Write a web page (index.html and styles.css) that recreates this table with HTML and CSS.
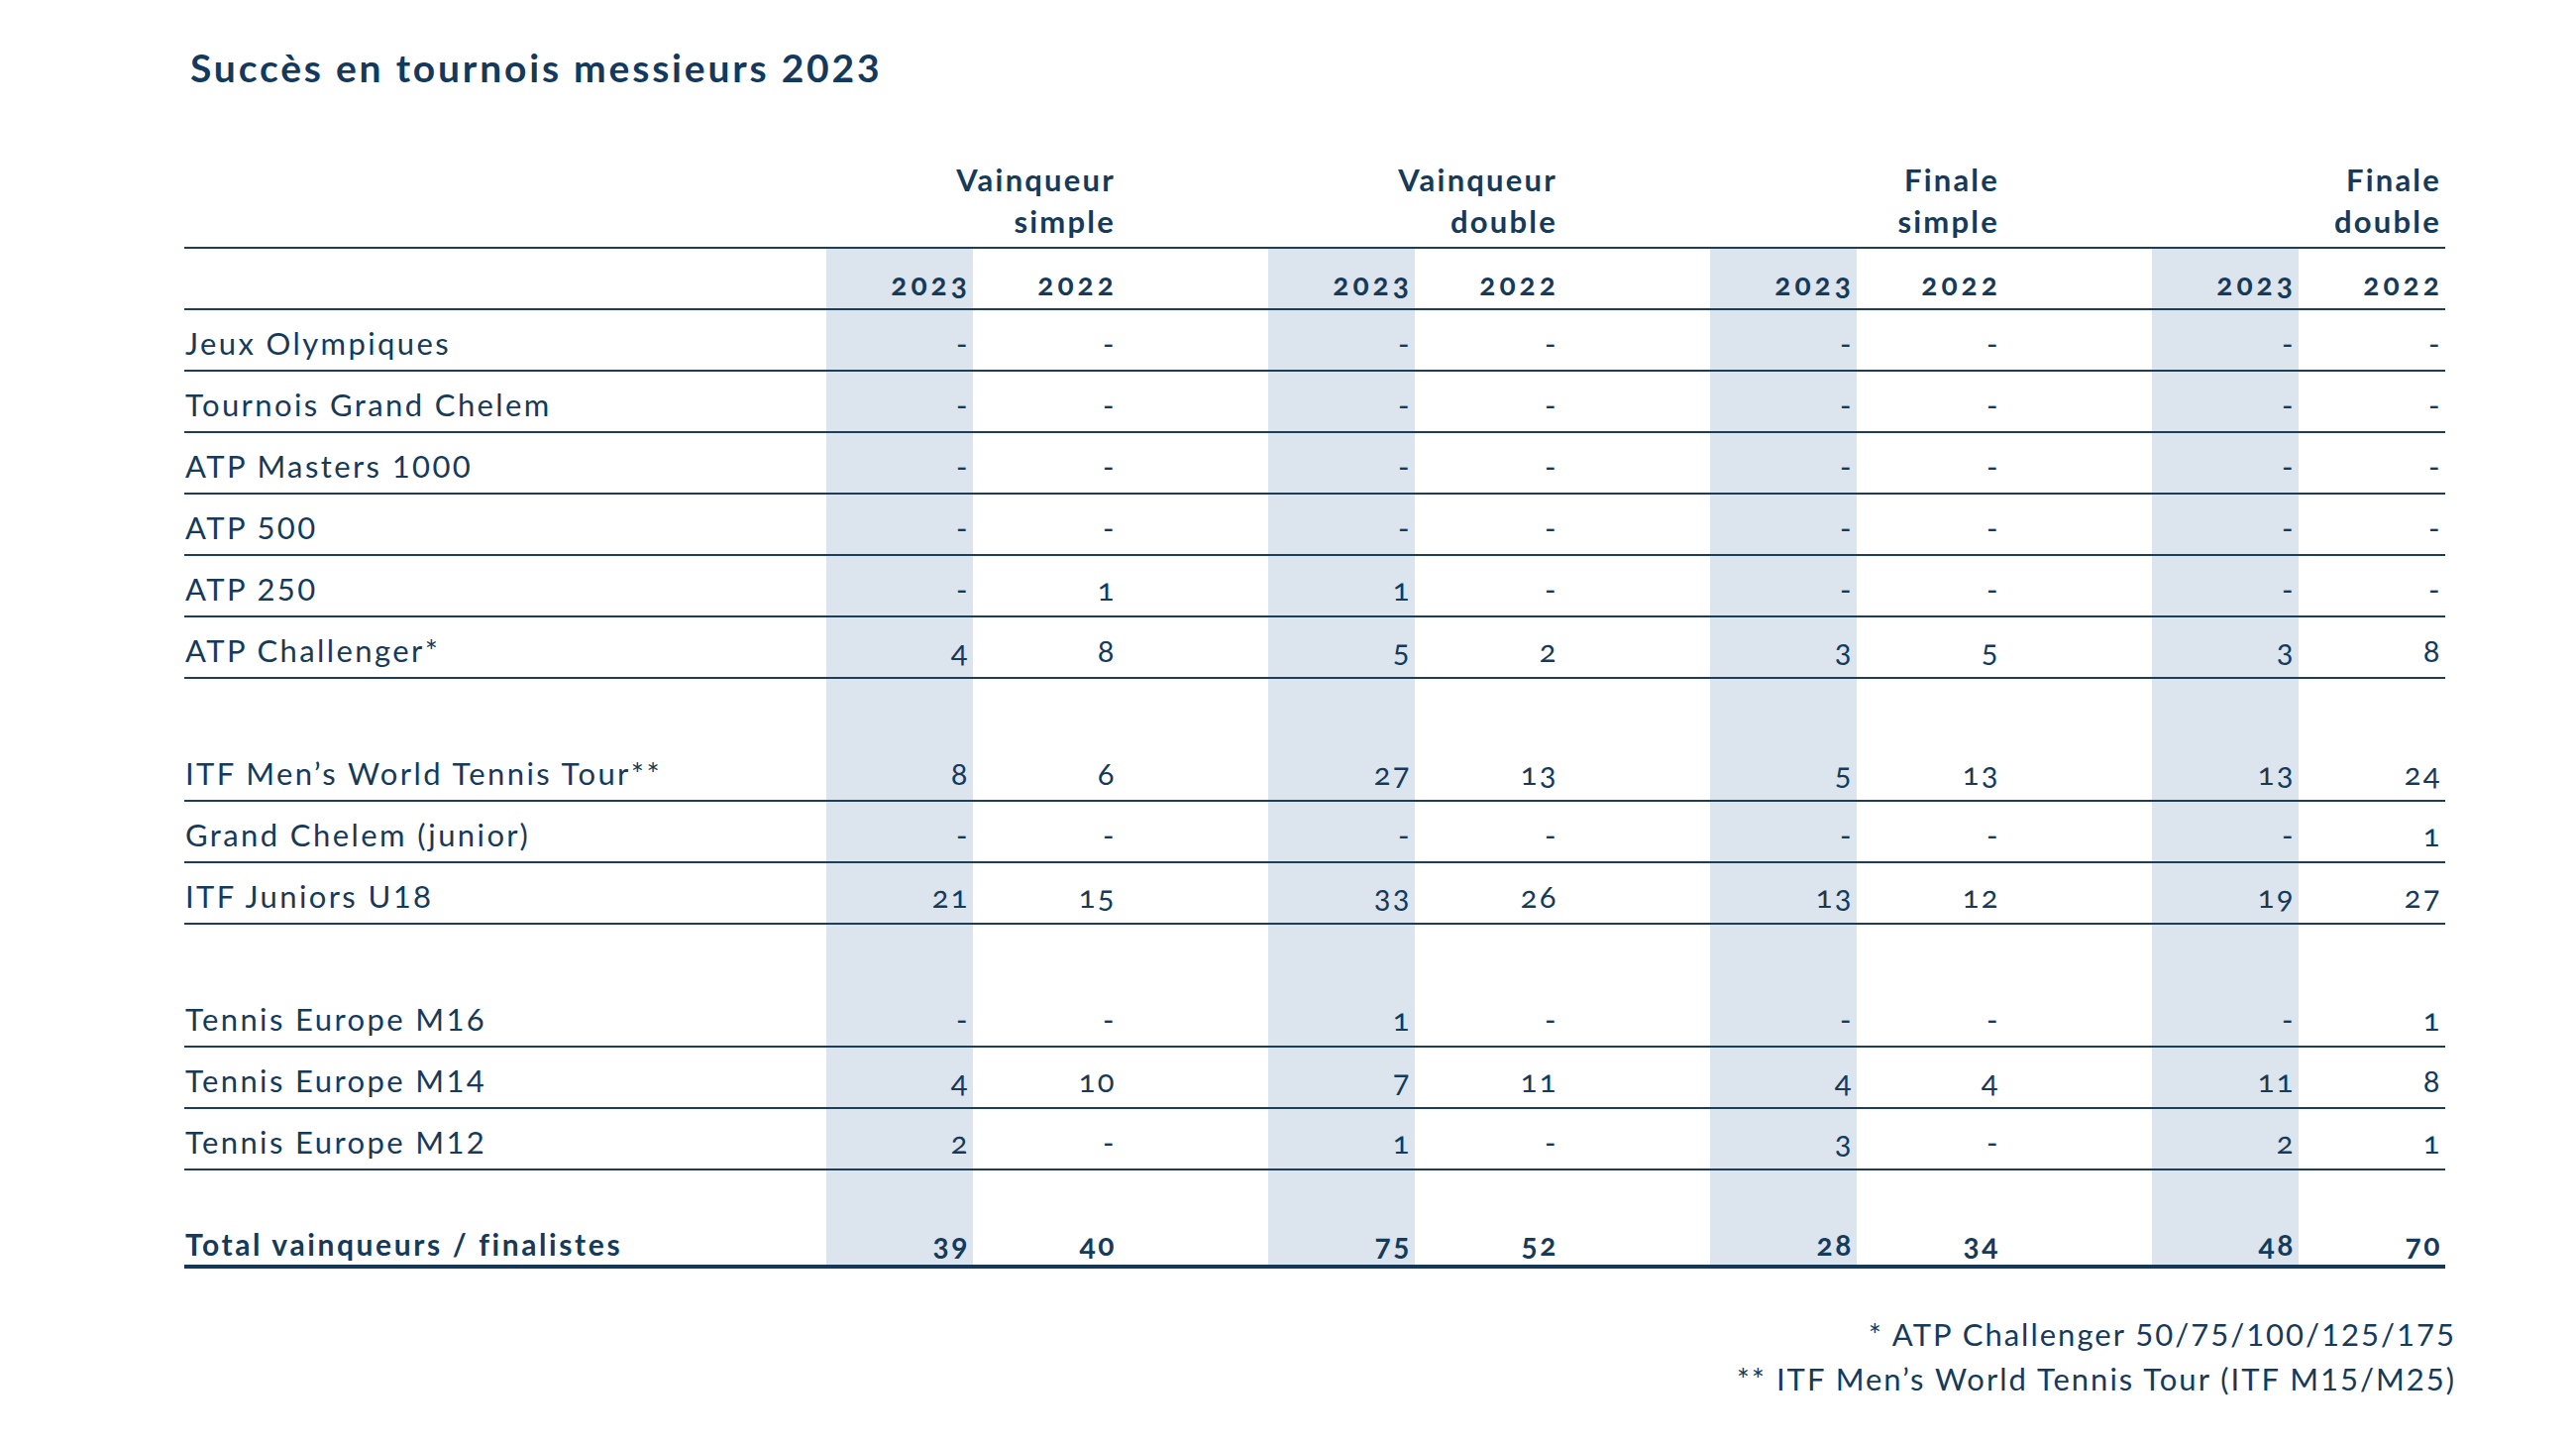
FILE: index.html
```html
<!DOCTYPE html>
<html lang="fr">
<head>
<meta charset="utf-8">
<title>Succès en tournois messieurs 2023</title>
<link rel="stylesheet" href="styles.css">
</head>
<body>
<main class="page">
  <h1 class="title">Succès en tournois messieurs 2023</h1>
  <table class="stats">
    <colgroup>
      <col class="c-label">
      <col class="c-num"><col class="c-num"><col class="c-gap">
      <col class="c-num"><col class="c-num"><col class="c-gap">
      <col class="c-num"><col class="c-num"><col class="c-gap">
      <col class="c-num"><col class="c-num">
    </colgroup>
    <thead>
      <tr class="groups">
        <th></th>
        <th colspan="2">Vainqueur<br>simple</th><th></th>
        <th colspan="2">Vainqueur<br>double</th><th></th>
        <th colspan="2">Finale<br>simple</th><th></th>
        <th colspan="2">Finale<br>double</th>
      </tr>
      <tr class="years">
        <th></th>
        <th>2023</th><th>2022</th><th></th>
        <th>2023</th><th>2022</th><th></th>
        <th>2023</th><th>2022</th><th></th>
        <th>2023</th><th>2022</th>
      </tr>
    </thead>
    <tbody>
      <tr><td>Jeux Olympiques</td><td>-</td><td>-</td><td></td><td>-</td><td>-</td><td></td><td>-</td><td>-</td><td></td><td>-</td><td>-</td></tr>
      <tr><td>Tournois Grand Chelem</td><td>-</td><td>-</td><td></td><td>-</td><td>-</td><td></td><td>-</td><td>-</td><td></td><td>-</td><td>-</td></tr>
      <tr><td>ATP Masters 1000</td><td>-</td><td>-</td><td></td><td>-</td><td>-</td><td></td><td>-</td><td>-</td><td></td><td>-</td><td>-</td></tr>
      <tr><td>ATP 500</td><td>-</td><td>-</td><td></td><td>-</td><td>-</td><td></td><td>-</td><td>-</td><td></td><td>-</td><td>-</td></tr>
      <tr><td>ATP 250</td><td>-</td><td>1</td><td></td><td>1</td><td>-</td><td></td><td>-</td><td>-</td><td></td><td>-</td><td>-</td></tr>
      <tr><td>ATP Challenger*</td><td>4</td><td>8</td><td></td><td>5</td><td>2</td><td></td><td>3</td><td>5</td><td></td><td>3</td><td>8</td></tr>
      <tr class="spacer"><td></td><td></td><td></td><td></td><td></td><td></td><td></td><td></td><td></td><td></td><td></td><td></td></tr>
      <tr><td>ITF Men’s World Tennis Tour**</td><td>8</td><td>6</td><td></td><td>27</td><td>13</td><td></td><td>5</td><td>13</td><td></td><td>13</td><td>24</td></tr>
      <tr><td>Grand Chelem (junior)</td><td>-</td><td>-</td><td></td><td>-</td><td>-</td><td></td><td>-</td><td>-</td><td></td><td>-</td><td>1</td></tr>
      <tr><td>ITF Juniors U18</td><td>21</td><td>15</td><td></td><td>33</td><td>26</td><td></td><td>13</td><td>12</td><td></td><td>19</td><td>27</td></tr>
      <tr class="spacer"><td></td><td></td><td></td><td></td><td></td><td></td><td></td><td></td><td></td><td></td><td></td><td></td></tr>
      <tr><td>Tennis Europe M16</td><td>-</td><td>-</td><td></td><td>1</td><td>-</td><td></td><td>-</td><td>-</td><td></td><td>-</td><td>1</td></tr>
      <tr><td>Tennis Europe M14</td><td>4</td><td>10</td><td></td><td>7</td><td>11</td><td></td><td>4</td><td>4</td><td></td><td>11</td><td>8</td></tr>
      <tr><td>Tennis Europe M12</td><td>2</td><td>-</td><td></td><td>1</td><td>-</td><td></td><td>3</td><td>-</td><td></td><td>2</td><td>1</td></tr>
      <tr class="total"><td>Total vainqueurs / finalistes</td><td>39</td><td>40</td><td></td><td>75</td><td>52</td><td></td><td>28</td><td>34</td><td></td><td>48</td><td>70</td></tr>
    </tbody>
  </table>
  <div class="notes">
    <p>* ATP Challenger 50/75/100/125/175</p>
    <p>** ITF Men’s World Tennis Tour (ITF M15/M25)</p>
  </div>
</main>
</body>
</html>
```

FILE: styles.css
```css
html, body {
  margin: 0;
  padding: 0;
  background: #ffffff;
}

body {
  font-family: "Lato", "Open Sans", "Liberation Sans", sans-serif;
  color: #163a5a;
}

.page {
  width: 2293px;
  margin-left: 186px;
  padding-top: 45px;
}

.title {
  margin: 0 0 69px 0;
  padding-left: 6px;
  font-size: 39px;
  line-height: 46px;
  font-weight: 700;
  letter-spacing: 2.8px;
  color: #133a5e;
}

.stats {
  width: 2282px;
  table-layout: fixed;
  border-collapse: collapse;
  border-spacing: 0;
}

.c-label { width: 648px; }
.c-num { width: 148px; }
.c-gap { width: 150px; }

.stats th,
.stats td {
  padding: 0 3px 9px 0;
  text-align: right;
  vertical-align: bottom;
  font-size: 31px;
  line-height: 36px;
  font-weight: 400;
  letter-spacing: 2.4px;
  border-bottom: 2px solid #1c3d5c;
  font-variant-numeric: oldstyle-nums;
  white-space: nowrap;
}

.stats td:first-child,
.stats th:first-child {
  text-align: left;
  padding-left: 1px;
  font-variant-numeric: lining-nums;
}

.stats tr > :nth-child(3n+2) {
  background: #dce4ed;
}

.stats .groups th {
  background: none;
  font-size: 31px;
  line-height: 42px;
  font-weight: 700;
  letter-spacing: 2.2px;
  padding: 0 4px 5px 0;
  border-bottom: 2px solid #1c3d5c;
}

.stats .years th {
  height: 53px;
  font-size: 30px;
  font-weight: 700;
  letter-spacing: 4px;
  padding: 0 2px 7px 0;
}

.stats tbody td {
  height: 51px;
}

.stats .spacer td {
  height: 62px;
  border-bottom: 0;
  padding: 0;
}

.stats .total td {
  height: 92px;
  font-size: 30px;
  font-weight: 700;
  letter-spacing: 2.6px;
  padding-bottom: 3px;
  border-bottom: 4px solid #163858;
}

.notes {
  margin-top: 44px;
  text-align: right;
  font-size: 31px;
  line-height: 45px;
  letter-spacing: 2px;
}

.notes p {
  margin: 0;
}
```
